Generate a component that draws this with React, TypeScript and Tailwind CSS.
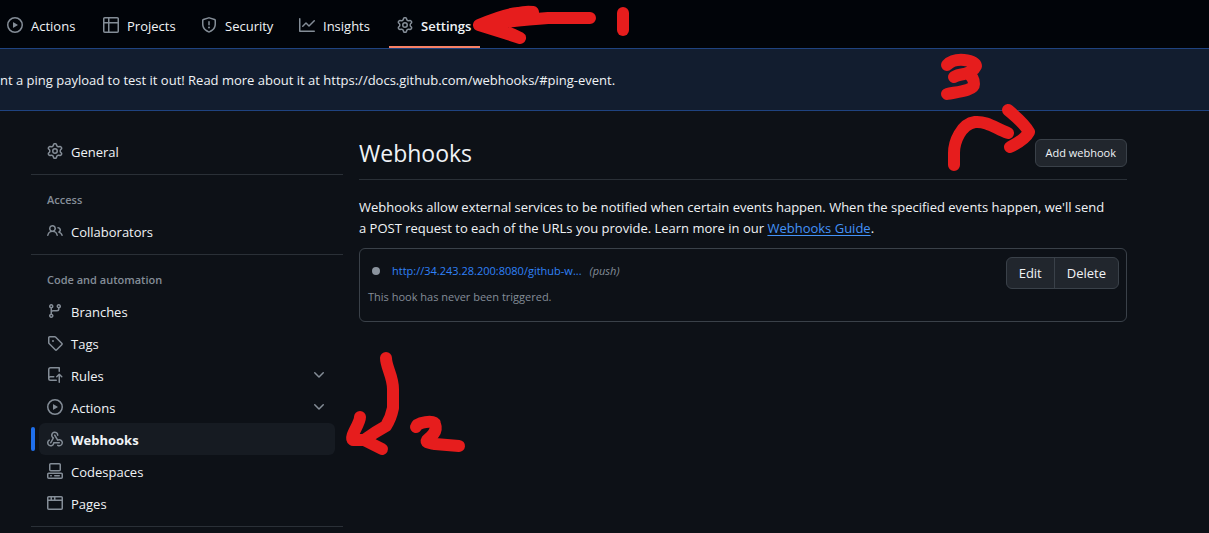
import type { ReactNode } from "react";

const icons = {
  play: "M8 0a8 8 0 1 1 0 16A8 8 0 0 1 8 0ZM1.5 8a6.5 6.5 0 1 0 13 0 6.5 6.5 0 0 0-13 0Zm4.879-2.773 4.264 2.559a.25.25 0 0 1 0 .428l-4.264 2.559A.25.25 0 0 1 6 10.559V5.442a.25.25 0 0 1 .379-.215Z",
  table: "M0 1.75C0 .784.784 0 1.75 0h12.5C15.216 0 16 .784 16 1.75v12.5A1.75 1.75 0 0 1 14.25 16H1.75A1.75 1.75 0 0 1 0 14.25ZM6.5 6.5v8h7.75a.25.25 0 0 0 .25-.25V6.5Zm8-1.5V1.75a.25.25 0 0 0-.25-.25H6.5V5Zm-13 1.5v7.75c0 .138.112.25.25.25H5v-8ZM5 5V1.5H1.75a.25.25 0 0 0-.25.25V5Z",
  shield: "M7.467.133a1.748 1.748 0 0 1 1.066 0l5.25 1.68A1.75 1.75 0 0 1 15 3.48V7c0 1.566-.32 3.182-1.303 4.682-.983 1.498-2.585 2.813-5.032 3.855a1.697 1.697 0 0 1-1.33 0c-2.447-1.042-4.049-2.357-5.032-3.855C1.32 10.182 1 8.566 1 7V3.48a1.75 1.75 0 0 1 1.217-1.667Zm.61 1.429a.25.25 0 0 0-.153 0l-5.25 1.68a.25.25 0 0 0-.174.238V7c0 1.358.275 2.666 1.057 3.86.784 1.194 2.121 2.34 4.366 3.297a.196.196 0 0 0 .154 0c2.245-.956 3.582-2.104 4.366-3.298C13.225 9.666 13.5 8.36 13.5 7V3.48a.251.251 0 0 0-.174-.237l-5.25-1.68ZM8.75 4.75v3a.75.75 0 0 1-1.5 0v-3a.75.75 0 0 1 1.5 0ZM9 10.5a1 1 0 1 1-2 0 1 1 0 0 1 2 0Z",
  graph: "M1.5 1.75V13.5h13.75a.75.75 0 0 1 0 1.5H.75a.75.75 0 0 1-.75-.75V1.75a.75.75 0 0 1 1.5 0Zm14.28 2.53-5.25 5.25a.75.75 0 0 1-1.06 0L7 7.06 4.28 9.78a.751.751 0 0 1-1.042-.018.751.751 0 0 1-.018-1.042l3.25-3.25a.75.75 0 0 1 1.06 0L10 7.94l4.72-4.72a.751.751 0 0 1 1.042.018.751.751 0 0 1 .018 1.042Z",
  gear: "M8 0a8.2 8.2 0 0 1 .701.031C9.444.095 9.99.645 10.16 1.29l.288 1.107c.018.066.079.158.212.224.231.114.454.243.668.386.123.082.233.09.299.071l1.103-.303c.644-.176 1.392.021 1.82.63.27.385.506.792.704 1.218.315.675.111 1.422-.364 1.891l-.814.806c-.049.048-.098.147-.088.294.016.257.016.515 0 .772-.01.147.038.246.088.294l.814.806c.475.469.679 1.216.364 1.891a7.977 7.977 0 0 1-.704 1.217c-.428.61-1.176.807-1.82.63l-1.102-.302c-.067-.019-.177-.011-.3.071a5.909 5.909 0 0 1-.668.386c-.133.066-.194.158-.211.224l-.29 1.106c-.168.646-.715 1.196-1.458 1.26a8.006 8.006 0 0 1-1.402 0c-.743-.064-1.289-.614-1.458-1.26l-.289-1.106c-.018-.066-.079-.158-.212-.224a5.738 5.738 0 0 1-.668-.386c-.123-.082-.233-.09-.299-.071l-1.103.303c-.644.176-1.392-.021-1.82-.63a8.12 8.12 0 0 1-.704-1.218c-.315-.675-.111-1.422.363-1.891l.815-.806c.05-.048.098-.147.088-.294a6.214 6.214 0 0 1 0-.772c.01-.147-.038-.246-.088-.294l-.815-.806C.635 6.045.431 5.298.746 4.623a7.92 7.92 0 0 1 .704-1.217c.428-.61 1.176-.807 1.82-.63l1.102.302c.067.019.177.011.3-.071.214-.143.437-.272.668-.386.133-.066.194-.158.211-.224l.29-1.106C6.009.645 6.556.095 7.299.03 7.53.01 7.764 0 8 0Zm-.571 1.525c-.036.003-.108.036-.137.146l-.289 1.105c-.147.561-.549.967-.998 1.189-.173.086-.34.183-.5.29-.417.278-.97.423-1.529.27l-1.103-.303c-.109-.03-.175.016-.195.045-.22.312-.412.644-.573.99-.014.031-.021.11.059.19l.815.806c.411.406.562.957.53 1.456a4.709 4.709 0 0 0 0 .582c.032.499-.119 1.05-.53 1.456l-.815.806c-.081.08-.073.159-.059.19.162.346.353.677.573.989.02.03.085.076.195.046l1.102-.303c.56-.153 1.113-.008 1.53.27.161.107.328.204.501.29.447.222.85.629.997 1.189l.289 1.105c.029.109.101.143.137.146a6.6 6.6 0 0 0 1.142 0c.036-.003.108-.036.137-.146l.289-1.105c.147-.561.549-.967.998-1.189.173-.086.34-.183.5-.29.417-.278.97-.423 1.529-.27l1.103.303c.109.029.175-.016.195-.045.22-.313.411-.644.573-.99.014-.031.021-.11-.059-.19l-.815-.806c-.411-.406-.562-.957-.53-1.456a4.709 4.709 0 0 0 0-.582c-.032-.499.119-1.05.53-1.456l.815-.806c.081-.08.073-.159.059-.19a6.464 6.464 0 0 0-.573-.989c-.02-.03-.085-.076-.195-.046l-1.102.303c-.56.153-1.113.008-1.53-.27a4.44 4.44 0 0 0-.501-.29c-.447-.222-.85-.629-.997-1.189l-.289-1.105c-.029-.11-.101-.143-.137-.146a6.6 6.6 0 0 0-1.142 0ZM11 8a3 3 0 1 1-6 0 3 3 0 0 1 6 0ZM9.5 8a1.5 1.5 0 1 0-3.001.001A1.5 1.5 0 0 0 9.5 8Z",
  people: "M2 5.5a3.5 3.5 0 1 1 5.898 2.549 5.508 5.508 0 0 1 3.034 4.084.75.75 0 1 1-1.482.235 4 4 0 0 0-7.9 0 .75.75 0 0 1-1.482-.236A5.507 5.507 0 0 1 3.102 8.05 3.493 3.493 0 0 1 2 5.5ZM11 4a3.001 3.001 0 0 1 2.22 5.018 5.01 5.01 0 0 1 2.56 3.012.749.749 0 0 1-.885.954.752.752 0 0 1-.549-.514 3.507 3.507 0 0 0-2.522-2.372.75.75 0 0 1-.574-.73v-.352a.75.75 0 0 1 .416-.672A1.5 1.5 0 0 0 11 5.5.75.75 0 0 1 11 4Zm-5.5-.5a2 2 0 1 0-.001 3.999A2 2 0 0 0 5.5 3.5Z",
  branch: "M9.5 3.25a2.25 2.25 0 1 1 3 2.122V6A2.5 2.5 0 0 1 10 8.5H6a1 1 0 0 0-1 1v1.128a2.251 2.251 0 1 1-1.5 0V5.372a2.25 2.25 0 1 1 1.5 0v1.836A2.493 2.493 0 0 1 6 7h4a1 1 0 0 0 1-1v-.628A2.25 2.25 0 0 1 9.5 3.25Zm-6 0a.75.75 0 1 0 1.5 0 .75.75 0 0 0-1.5 0Zm8.25-.75a.75.75 0 1 0 0 1.5.75.75 0 0 0 0-1.5ZM4.25 12a.75.75 0 1 0 0 1.5.75.75 0 0 0 0-1.5Z",
  tag: "M1 7.775V2.75C1 1.784 1.784 1 2.75 1h5.025c.464 0 .91.184 1.238.513l6.25 6.25a1.75 1.75 0 0 1 0 2.474l-5.026 5.026a1.75 1.75 0 0 1-2.474 0l-6.25-6.25A1.752 1.752 0 0 1 1 7.775Zm1.5 0c0 .066.026.13.073.177l6.25 6.25a.25.25 0 0 0 .354 0l5.025-5.025a.25.25 0 0 0 0-.354l-6.25-6.25a.25.25 0 0 0-.177-.073H2.75a.25.25 0 0 0-.25.25ZM6 5a1 1 0 1 1 0 2 1 1 0 0 1 0-2Z",
  push: "M1 2.5A2.5 2.5 0 0 1 3.5 0h8.75a.75.75 0 0 1 .75.75v3.5a.75.75 0 0 1-1.5 0V1.5h-8a1 1 0 0 0-1 1v6.708A2.493 2.493 0 0 1 3.5 9h3.25a.75.75 0 0 1 0 1.5H3.5a1 1 0 0 0 0 2h5.75a.75.75 0 0 1 0 1.5H3.5A2.5 2.5 0 0 1 1 11.5Zm13.23 7.79h-.001l-1.224-1.224v6.184a.75.75 0 0 1-1.5 0V9.066L10.28 10.29a.75.75 0 0 1-1.06-1.061l2.505-2.504a.75.75 0 0 1 1.06 0L15.29 9.23a.751.751 0 0 1-.018 1.042.751.751 0 0 1-1.042.018Z",
  webhook: "M5.5 4.25a2.25 2.25 0 0 1 4.5 0 .75.75 0 0 0 1.5 0 3.75 3.75 0 1 0-6.14 2.889l-2.272 4.258a.75.75 0 0 0 1.324.706L7 7.25a.75.75 0 0 0-.309-1.015A2.25 2.25 0 0 1 5.5 4.25ZM7.364 3.607a.75.75 0 0 1 1.03.257l2.608 4.349a3.75 3.75 0 1 1-.628 6.785.75.75 0 0 1 .752-1.299 2.25 2.25 0 1 0-.033-3.88.75.75 0 0 1-1.03-.256L7.107 4.636a.75.75 0 0 1 .257-1.03ZM2.9 8.776A.75.75 0 0 1 2.625 9.8 2.25 2.25 0 1 0 6 11.75a.75.75 0 0 1 .75-.751h5.5a.75.75 0 0 1 0 1.5H7.425a3.751 3.751 0 1 1-5.55-3.998.75.75 0 0 1 1.024.274Z",
  codespaces: "M0 11.25c0-.966.784-1.75 1.75-1.75h12.5c.966 0 1.75.784 1.75 1.75v3A1.75 1.75 0 0 1 14.25 16H1.75A1.75 1.75 0 0 1 0 14.25Zm2-9.5C2 .784 2.784 0 3.75 0h8.5C13.216 0 14 .784 14 1.75v5a1.75 1.75 0 0 1-1.75 1.75h-8.5A1.75 1.75 0 0 1 2 6.75Zm1.75-.25a.25.25 0 0 0-.25.25v5c0 .138.112.25.25.25h8.5a.25.25 0 0 0 .25-.25v-5a.25.25 0 0 0-.25-.25Zm-2 9.5a.25.25 0 0 0-.25.25v3c0 .138.112.25.25.25h12.5a.25.25 0 0 0 .25-.25v-3a.25.25 0 0 0-.25-.25ZM7 12.75a.75.75 0 0 1 .75-.75h4.5a.75.75 0 0 1 0 1.5h-4.5a.75.75 0 0 1-.75-.75Zm-4 0a.75.75 0 0 1 .75-.75h.5a.75.75 0 0 1 0 1.5h-.5a.75.75 0 0 1-.75-.75Z",
  browser: "M0 2.75C0 1.784.784 1 1.75 1h12.5c.966 0 1.75.784 1.75 1.75v10.5A1.75 1.75 0 0 1 14.25 15H1.75A1.75 1.75 0 0 1 0 13.25ZM14.5 6h-13v7.25c0 .138.112.25.25.25h12.5a.25.25 0 0 0 .25-.25Zm-6-3.5v2h6V2.75a.25.25 0 0 0-.25-.25ZM5 2.5v2h2v-2Zm-3.25 0a.25.25 0 0 0-.25.25V4.5h2v-2Z",
  chevron: "M12.78 5.22a.749.749 0 0 1 0 1.06l-4.25 4.25a.749.749 0 0 1-1.06 0L3.22 6.28a.749.749 0 1 1 1.06-1.06L8 8.939l3.72-3.719a.749.749 0 0 1 1.06 0Z",
};

type IconName = keyof typeof icons;

function Icon({ name }: { name: IconName }) {
  return (
    <svg viewBox="0 0 16 16" className="size-4 shrink-0 fill-[#848d97]" aria-hidden="true">
      <path d={icons[name]} />
    </svg>
  );
}

const tabs: { icon: IconName; label: string; active?: boolean }[] = [
  { icon: "play", label: "Actions" },
  { icon: "table", label: "Projects" },
  { icon: "shield", label: "Security" },
  { icon: "graph", label: "Insights" },
  { icon: "gear", label: "Settings", active: true },
];

interface Entry {
  icon: IconName;
  label: string;
  active?: boolean;
  expandable?: boolean;
}

const groups: { title?: string; items: Entry[] }[] = [
  { items: [{ icon: "gear", label: "General" }] },
  { title: "Access", items: [{ icon: "people", label: "Collaborators" }] },
  {
    title: "Code and automation",
    items: [
      { icon: "branch", label: "Branches" },
      { icon: "tag", label: "Tags" },
      { icon: "push", label: "Rules", expandable: true },
      { icon: "play", label: "Actions", expandable: true },
      { icon: "webhook", label: "Webhooks", active: true },
      { icon: "codespaces", label: "Codespaces" },
      { icon: "browser", label: "Pages" },
    ],
  },
];

function TabBar() {
  return (
    <nav className="flex h-12 items-stretch gap-2 bg-[#010409] text-[13px]">
      {tabs.map((tab) => (
        <a
          key={tab.label}
          href="#"
          className={
            tab.active
              ? "flex min-w-[91px] items-center gap-2 border-b-2 border-[#f78166] px-2 pt-1 font-semibold"
              : "flex min-w-[90px] items-center gap-2 border-b-2 border-transparent px-2 pt-1 first:min-w-[87px] first:pl-[7px]"
          }
        >
          <Icon name={tab.icon} />
          <span className="pt-[3px]">{tab.label}</span>
        </a>
      ))}
    </nav>
  );
}

function Row({ entry }: { entry: Entry }) {
  const content: ReactNode = (
    <>
      <Icon name={entry.icon} />
      <span className="grow pt-[3px] text-left">{entry.label}</span>
      {entry.expandable && <Icon name="chevron" />}
    </>
  );
  if (entry.expandable) {
    return (
      <li className="px-2">
        <button type="button" className="flex h-8 w-full items-center gap-2 rounded-md px-2">
          {content}
        </button>
      </li>
    );
  }
  if (entry.active) {
    return (
      <li className="flex items-center gap-1">
        <span className="h-6 w-1 rounded-md bg-[#1f6feb]" />
        <a href="#" aria-current="page" className="mr-2 flex h-8 grow items-center gap-2 rounded-md bg-[#161b22] px-2 font-bold">
          {content}
        </a>
      </li>
    );
  }
  return (
    <li className="px-2">
      <a href="#" className="flex h-8 items-center gap-2 rounded-md px-2">
        {content}
      </a>
    </li>
  );
}

function Sidebar() {
  return (
    <nav className="w-[312px] shrink-0 text-[13px]">
      {groups.map((group) => (
        <section key={group.items[0].label} className="mb-2 border-b border-[#2a3037] pb-[7px]">
          {group.title && (
            <h2 className="flex h-8 items-center px-4 pt-0.5 text-[11px] font-semibold text-[#848d97]">{group.title}</h2>
          )}
          <ul>
            {group.items.map((entry) => (
              <Row key={entry.label} entry={entry} />
            ))}
          </ul>
        </section>
      ))}
    </nav>
  );
}

function Annotations() {
  return (
    <svg
      className="pointer-events-none absolute top-0 left-0"
      width="1209"
      height="533"
      viewBox="0 0 1209 533"
      fill="none"
      stroke="#e61d1d"
      strokeWidth="12"
      strokeLinecap="round"
      strokeLinejoin="round"
      aria-hidden="true"
    >
      <path d="M590 18H548Q520 20 479 25L520 38Q508 31 479 25Q505 14 518 13Q526 11 533 12L532 15L500 21" />
      <path d="M623 13V30" />
      <path d="M947 65Q953 59 964 60Q975 61 976 66Q973 72 964 74Q957 75 954 77M967 73Q974 77 974 84C974 91 956 92 947 94" />
      <path d="M954 165V153C954 142 961 124 975 122C987 121 995 128 1008 133" />
      <path d="M1008 110Q1025 124 1029 132C1026 138 1018 143 1010 147" />
      <path d="M386 358C386 367 393 376 393 389V408Q391 418 386 426Q375 432 364 440H353C349 437 360 424 360 417M364 440L382 449" />
      <path d="M416 427C417 422 434 420 435 424C438 432 431 437 427 440C425 443 430 443 435 444L459 446" />
    </svg>
  );
}

export default function App() {
  return (
    <div className="relative min-h-screen overflow-hidden bg-[#0d1117] font-['Open_Sans','Noto_Sans',sans-serif] text-[#f0f3f6]">
      <TabBar />
      <div className="flex h-[63px] items-center overflow-hidden border-y border-[#1f4380] bg-[#121d2f] pt-0.5 text-[13px] whitespace-nowrap">
        nt a ping payload to test it out! Read more about it at https://docs.github.com/webhooks/#ping-event.
      </div>
      <div className="mr-[82px] ml-[31px] flex gap-4 pt-6">
        <Sidebar />
        <main className="min-w-0 grow text-[13px]">
          <header className="flex items-center justify-between border-b border-[#2a3037] pt-1 pb-3">
            <h1 className="text-[23px] leading-7">Webhooks</h1>
            <button type="button" className="h-7 rounded-md border border-[#3a4149] bg-[#21262d] px-[10px] pt-px text-[11px] font-medium">
              Add webhook
            </button>
          </header>
          <p className="mt-[17px] pr-4 leading-[21px]">
            Webhooks allow external services to be notified when certain events happen. When the specified events happen, we'll send
            a POST request to each of the URLs you provide. Learn more in our{" "}
            <a href="#" className="text-[#4493f8] underline underline-offset-2">
              Webhooks Guide
            </a>
            .
          </p>
          <div className="mt-[9px] flex h-[74px] items-start justify-between rounded-md border border-[#3a4149] p-2 pr-[7px] text-[11px]">
            <div>
              <div className="flex h-7 items-center pl-1">
                <span className="mr-3 size-2 rounded-full bg-[#8b949e]" />
                <a href="#" className="mr-2 text-[#2f81f7]">
                  http://34.243.28.200:8080/github-w...
                </a>
                <em className="text-[#848d97]">(push)</em>
              </div>
              <p className="leading-6 text-[#848d97]">This hook has never been triggered.</p>
            </div>
            <div className="flex h-8 divide-x divide-[#3a4149] rounded-md border border-[#3a4149] bg-[#21262d] text-[13px] font-medium">
              <button type="button" className="px-3 pt-0.5">
                Edit
              </button>
              <button type="button" className="px-3 pt-0.5">
                Delete
              </button>
            </div>
          </div>
        </main>
      </div>
      <Annotations />
    </div>
  );
}
